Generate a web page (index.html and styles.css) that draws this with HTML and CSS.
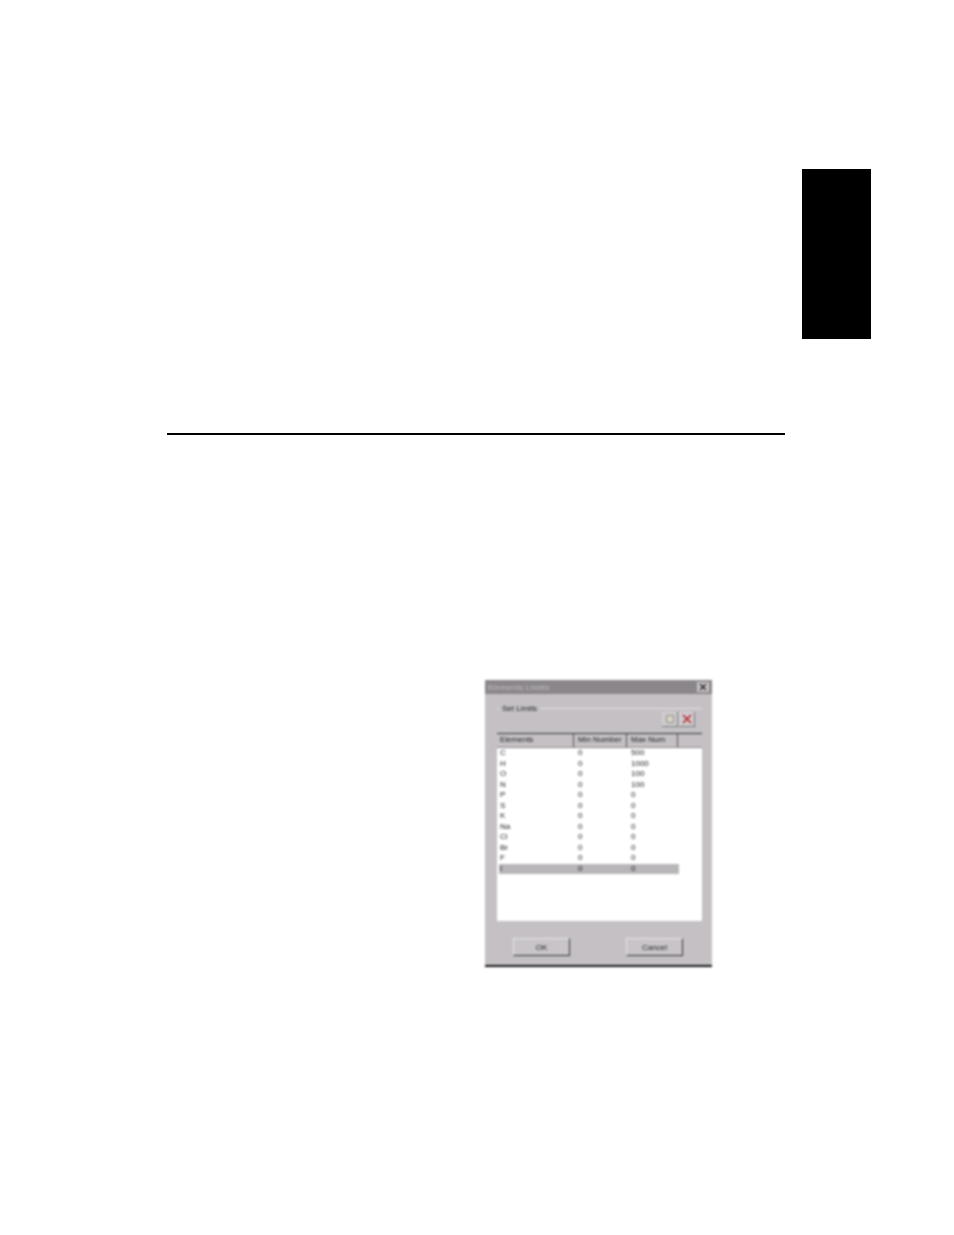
FILE: index.html
```html
<!DOCTYPE html>
<html lang="en">
<head>
    <meta charset="UTF-8">
    <title>Elements Limits</title>
    <link rel="stylesheet" href="styles.css">
</head>
<body>
<div class="page">
    <div class="tab"></div>
    <div class="rule"></div>

    <div class="dialog">
        <div class="titlebar">
            <span class="title">Elements Limits</span>
            <span class="close">
                <svg width="10" height="8" viewBox="0 0 10 8"><path d="M2 1l6 6M8 1l-6 6" stroke="#222" stroke-width="1.4" fill="none"/></svg>
            </span>
        </div>

        <div class="group">
            <span class="legend">Set Limits</span>
            <div class="tools">
                <span class="tool">
                    <svg width="10" height="10" viewBox="0 0 10 10"><path d="M1.5 1.5h7v7h-7z" fill="#d8d4c8" stroke="#8c8a80"/></svg>
                </span>
                <span class="tool">
                    <svg width="12" height="10" viewBox="0 0 12 10"><path d="M2 1l8 8M10 1l-8 8" stroke="#b5222a" stroke-width="1.6" fill="none"/></svg>
                </span>
            </div>
        </div>

        <div class="list">
            <div class="head">
                <span class="col-a">Elements</span>
                <span class="col-b">Min Number</span>
                <span class="col-c">Max Num</span>
                <span class="col-d"></span>
            </div>
            <div class="row"><span class="col-a">C</span><span class="col-b">0</span><span class="col-c">500</span></div>
            <div class="row"><span class="col-a">H</span><span class="col-b">0</span><span class="col-c">1000</span></div>
            <div class="row"><span class="col-a">O</span><span class="col-b">0</span><span class="col-c">100</span></div>
            <div class="row"><span class="col-a">N</span><span class="col-b">0</span><span class="col-c">100</span></div>
            <div class="row"><span class="col-a">P</span><span class="col-b">0</span><span class="col-c">0</span></div>
            <div class="row"><span class="col-a">S</span><span class="col-b">0</span><span class="col-c">0</span></div>
            <div class="row"><span class="col-a">K</span><span class="col-b">0</span><span class="col-c">0</span></div>
            <div class="row"><span class="col-a">Na</span><span class="col-b">0</span><span class="col-c">0</span></div>
            <div class="row"><span class="col-a">Cl</span><span class="col-b">0</span><span class="col-c">0</span></div>
            <div class="row"><span class="col-a">Br</span><span class="col-b">0</span><span class="col-c">0</span></div>
            <div class="row"><span class="col-a">F</span><span class="col-b">0</span><span class="col-c">0</span></div>
            <div class="row selected"><span class="col-a">I</span><span class="col-b">0</span><span class="col-c">0</span></div>
        </div>

        <div class="actions">
            <button type="button">OK</button>
            <button type="button">Cancel</button>
        </div>
    </div>
</div>
</body>
</html>
```

FILE: styles.css
```css
body {
    margin: 0;
    background-color: #fff;
    font-family: "Liberation Sans", Arial, sans-serif;
}
.page {
    width: 954px;
    height: 1235px;
    padding-top: 169px;
    box-sizing: border-box;
    overflow: hidden;
}
.tab {
    width: 69px;
    height: 170px;
    margin-left: 802px;
    background-color: #000;
}
.rule {
    width: 618px;
    height: 2px;
    margin: 94px 0 0 167px;
    background-color: #000;
}
.dialog {
    width: 227px;
    height: 287px;
    margin: 245px 0 0 485px;
    box-sizing: border-box;
    border-bottom: 2px solid #111;
    background-color: #c4c0c4;
    color: #222;
    font-size: 8px;
    filter: blur(0.8px);
}
.titlebar {
    display: flex;
    justify-content: space-between;
    align-items: center;
    height: 14px;
    padding: 0 3px;
    background-color: #8a868a;
}
.title {
    color: #b4b0b4;
    font-weight: bold;
    font-size: 8px;
}
.close {
    display: flex;
    align-items: center;
    justify-content: center;
    width: 12px;
    height: 10px;
    background-color: #c8c4c8;
}
.group {
    position: relative;
    height: 24px;
    margin: 14px 10px 0 12px;
    border-top: 1px solid #e4e2e4;
}
.legend {
    position: absolute;
    top: -5px;
    left: 2px;
    padding: 0 3px;
    background-color: #c4c0c4;
}
.tools {
    display: flex;
    justify-content: flex-end;
    gap: 1px;
    padding: 3px 7px 0 0;
}
.tool {
    display: flex;
    align-items: center;
    justify-content: center;
    width: 16px;
    height: 15px;
    background-color: #cfcccf;
    border-right: 1px solid #777;
    border-bottom: 1px solid #777;
    box-sizing: border-box;
}
.list {
    width: 205px;
    height: 188px;
    margin-left: 12px;
    box-sizing: border-box;
    background-color: #fff;
    border-top: 1px solid #333;
}
.head {
    display: flex;
    height: 14px;
    line-height: 12px;
    background-color: #c4c0c4;
    box-sizing: border-box;
    border-bottom: 1px solid #888;
}
.head span {
    height: 13px;
    box-sizing: border-box;
    border-right: 1px solid #555;
}
.row {
    display: flex;
    width: 180px;
    height: 10.5px;
    line-height: 10.5px;
    margin-left: 2px;
}
.selected {
    background-color: #b8b6b8;
}
.col-a {
    width: 77px;
    padding-left: 3px;
    box-sizing: border-box;
}
.row .col-a {
    width: 75px;
    padding-left: 1px;
}
.col-b {
    width: 53px;
    padding-left: 4px;
    box-sizing: border-box;
}
.col-c {
    width: 51px;
    padding-left: 4px;
    box-sizing: border-box;
}
.col-d {
    flex: 1;
    border-right: none !important;
}
.actions {
    display: flex;
    justify-content: space-between;
    padding: 17px 29px 0 28px;
}
button {
    width: 57px;
    height: 18px;
    padding: 0;
    border: none;
    border-top: 1px solid #e8e6e8;
    border-left: 1px solid #e8e6e8;
    border-right: 1px solid #333;
    border-bottom: 1px solid #333;
    background-color: #c8c4c8;
    color: #222;
    font-family: inherit;
    font-size: 8px;
}
```
